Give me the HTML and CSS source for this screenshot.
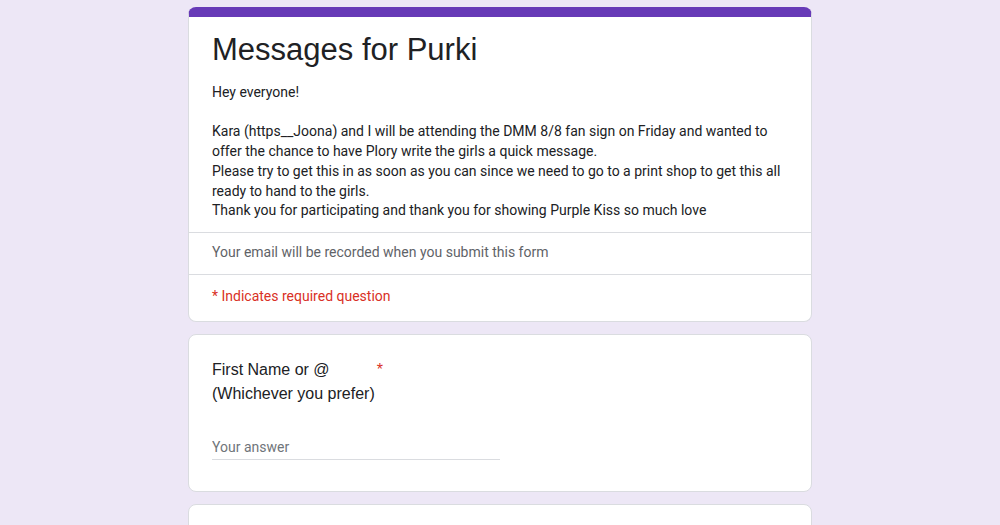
FILE: index.html
```html
<!DOCTYPE html>
<html lang="en">
<head>
    <meta charset="UTF-8">
    <meta name="viewport" content="width=device-width, initial-scale=1.0">
    <title>Messages for Purki</title>
    <link rel="stylesheet" href="styles.css">
</head>
<body>
    <div class="form-wrap">
        <!-- Cabecera del formulario -->
        <div class="card header-card">
            <div class="header-top">
                <h1 class="form-title">Messages for Purki</h1>
                <div class="form-desc">Hey everyone!

Kara (https__Joona) and I will be attending the DMM 8/8 fan sign on Friday and wanted to offer the chance to have Plory write the girls a quick message.
Please try to get this in as soon as you can since we need to go to a print shop to get this all ready to hand to the girls.
Thank you for participating and thank you for showing Purple Kiss so much love</div>
            </div>
            <div class="header-row email-note">Your email will be recorded when you submit this form</div>
            <div class="header-row required-note">* Indicates required question</div>
        </div>

        <!-- Pregunta 1 -->
        <div class="card question-card">
            <div class="question-title">
                <span class="question-text">First Name or @<br>(Whichever you prefer)</span>
                <span class="required-star">*</span>
            </div>
            <input type="text" class="answer-input" placeholder="Your answer">
        </div>

        <!-- Pregunta 2 (cortada) -->
        <div class="card question-card"></div>
    </div>
</body>
</html>
```

FILE: styles.css
```css
body {
    margin: 0;
    background-color: #ede7f6;
    font-family: Roboto, Arial, sans-serif;
    color: #202124;
}
.form-wrap {
    width: 624px;
    margin: 0 auto;
    padding-top: 7px;
    display: flex;
    flex-direction: column;
    gap: 12px;
}
.card {
    background-color: #ffffff;
    border: 1px solid #dadce0;
    border-radius: 8px;
    box-sizing: border-box;
}
.header-card {
    border-top: 10px solid #673ab7;
}
.header-top {
    padding: 13px 23px 11px;
}
.form-title {
    margin: 0;
    font-family: Arial, "Liberation Sans", sans-serif;
    font-weight: 400;
    font-size: 31px;
    line-height: 40px;
    color: #202124;
}
.form-desc {
    margin-top: 13px;
    font-size: 14px;
    line-height: 19.7px;
    white-space: pre-wrap;
    color: #202124;
}
.header-row {
    border-top: 1px solid #dadce0;
    padding: 9px 23px 12px;
    font-size: 14px;
    line-height: 20px;
}
.email-note {
    color: #5f6368;
}
.required-note {
    color: #d93025;
    padding-top: 11px;
    padding-bottom: 15px;
}
.question-card {
    padding: 23px 23px 30px;
    min-height: 158px;
}
.question-title {
    display: flex;
    align-items: flex-start;
    font-family: Arial, "Liberation Sans", sans-serif;
    font-size: 16px;
    line-height: 24px;
    color: #202124;
}
.required-star {
    color: #d93025;
    padding-left: 2px;
}
.answer-input {
    display: block;
    width: 50%;
    margin-top: 31px;
    padding: 0 0 2px;
    border: none;
    border-bottom: 1px solid #dadce0;
    font-family: Roboto, Arial, sans-serif;
    font-size: 14px;
    line-height: 20px;
    color: #202124;
    background: transparent;
    outline: none;
}
.answer-input::placeholder {
    color: #70757a;
}
```
